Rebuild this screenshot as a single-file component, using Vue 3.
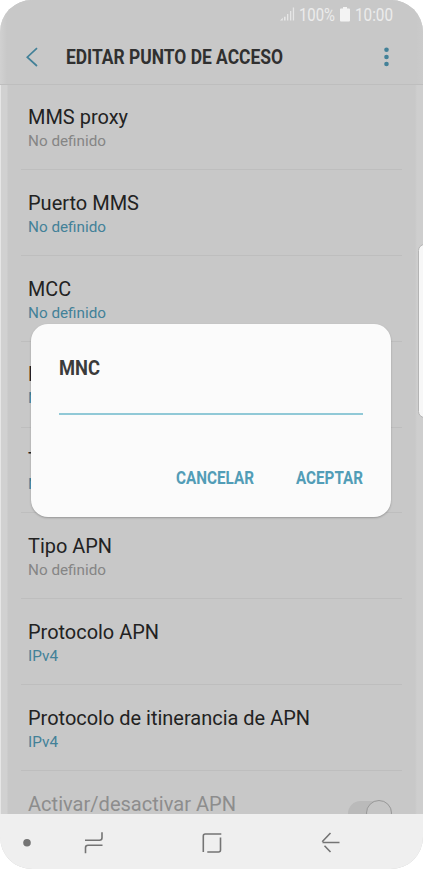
<script setup>
const rows = [
  { title: 'MMS proxy', w: 100, value: 'No definido', vw: 78, muted: true },
  { title: 'Puerto MMS', w: 111, value: 'No definido', vw: 78 },
  { title: 'MCC', w: 43, value: 'No definido', vw: 78 },
  { title: 'MNC', w: 43, value: 'No definido', vw: 78 },
  { title: 'Tipo de autenticación', w: 186, value: 'No definido', vw: 78 },
  { title: 'Tipo APN', w: 84, value: 'No definido', vw: 78, muted: true },
  { title: 'Protocolo APN', w: 131, value: 'IPv4', vw: 30 },
  { title: 'Protocolo de itinerancia de APN', w: 282, value: 'IPv4', vw: 30 },
]
</script>

<template>
  <div class="phone">
    <header class="top">
      <div class="status">
        <svg class="signal" width="15" height="14" viewBox="0 0 15 14">
          <path d="M0 13.5 2.8 10.7V13.5ZM4 9.8H5.6V13.5H4ZM7 7H8.3V13.5H7ZM10 4H11.3V13.5H10ZM12.8 .5H14.1V13.5H12.8Z" fill="#e6e6e6" />
        </svg>
        <svg class="pct" width="37" height="22"><text x="0" y="17" textLength="36" lengthAdjust="spacingAndGlyphs">100%</text></svg>
        <svg class="battery" width="10" height="15" viewBox="0 0 10 15">
          <path d="M3 0H7V1.500H9Q10 1.500 10 2.500V13.500Q10 14.500 9 14.500H1Q0 14.500 0 13.500V2.500Q0 1.500 1 1.500H3Z" fill="#f3f3f3" />
        </svg>
        <svg class="clock" width="40" height="22"><text x="0" y="17" textLength="38" lengthAdjust="spacingAndGlyphs">10:00</text></svg>
      </div>
      <div class="bar">
        <svg class="back" width="14" height="22" viewBox="0 0 14 22"><path d="M12 2.200 2.300 11.200 12 20" fill="none" stroke="#438198" stroke-width="1.700" /></svg>
        <svg class="heading" width="220" height="28"><text x="0" y="21" textLength="217" lengthAdjust="spacingAndGlyphs">EDITAR PUNTO DE ACCESO</text></svg>
        <svg class="more" width="6" height="22" viewBox="0 0 6 22" fill="#438198"><circle cx="3.500" cy="3.700" r="2.300" /><circle cx="3.500" cy="11" r="2.300" /><circle cx="3.500" cy="18" r="2.300" /></svg>
      </div>
    </header>

    <main class="list">
      <div v-for="r in rows" :key="r.title" class="row">
        <svg class="title" height="26" :width="r.w + 4"><text x="0" y="20" :textLength="r.w" lengthAdjust="spacingAndGlyphs">{{ r.title }}</text></svg>
        <svg class="value" :class="{ muted: r.muted }" height="20" :width="r.vw + 4"><text x="0" y="15" :textLength="r.vw" lengthAdjust="spacingAndGlyphs">{{ r.value }}</text></svg>
      </div>
      <div class="row last">
        <svg class="title off" height="26" width="212"><text x="0" y="20.500" textLength="208" lengthAdjust="spacingAndGlyphs">Activar/desactivar APN</text></svg>
        <span class="toggle"><span class="knob"></span></span>
      </div>
    </main>

    <nav class="nav">
      <svg width="423" height="56" viewBox="0 0 423 56" fill="none" stroke="#747474" stroke-width="1.600">
        <circle cx="27" cy="28.700" r="3.800" fill="#747474" stroke="none" />
        <path d="M85 26.300H99.500Q102 26.300 102 23.800V18.300M102.500 31.200H88Q85.500 31.200 85.500 33.700V39.200" />
        <path d="M203.300 38V22Q203.300 20 205.300 20H221.300M220.500 23.500V36Q220.500 38 218.500 38H207.300" />
        <path d="M339.500 28.500H322.500M330.500 19 322.200 27.800M324.500 31.800 330.500 38" />
      </svg>
    </nav>

    <div class="edge"></div>

    <section class="dialog" role="dialog">
      <svg class="name" width="46" height="28"><text x="0" y="21" textLength="41" lengthAdjust="spacingAndGlyphs">MNC</text></svg>
      <div class="field"></div>
      <div class="actions">
        <svg width="78" height="24"><text x="0" y="18" textLength="78" lengthAdjust="spacingAndGlyphs">CANCELAR</text></svg>
        <svg width="67" height="24"><text x="0" y="18" textLength="67" lengthAdjust="spacingAndGlyphs">ACEPTAR</text></svg>
      </div>
    </section>
  </div>
</template>

<style>
body { margin: 0; background: #fff; }
</style>

<style scoped>
.phone {
  position: relative;
  box-sizing: border-box;
  width: 423px;
  height: 869px;
  overflow: hidden;
  display: flex;
  flex-direction: column;
  border-radius: 32px;
  background: linear-gradient(90deg, #e6e6e6 0 1px, #d1d1d1 1px 7px, #c8c8c8 8px 415px, #cecece 417px 423px);
  font-family: Roboto, "Liberation Sans", sans-serif;
}
svg { display: block; flex: none; overflow: visible; }
.top {
  box-sizing: border-box;
  height: 84.500px;
  flex: none;
  border-bottom: 1px solid #bebebe;
  background: linear-gradient(90deg, #d1d1d1 0, #c8c8c8 7px 416px, #cbcbcb 423px);
}
.status {
  height: 29px;
  display: flex;
  align-items: flex-start;
  justify-content: flex-end;
  padding-right: 28px;
  font-size: 18px;
  fill: #ececec;
}
.signal { margin: 7px 4.500px 0 0; }
.pct { margin: 3.500px 4px 0 0; }
.battery { margin: 6.500px 5px 0 0; }
.clock { margin-top: 3.500px; }
.bar {
  height: 55px;
  display: flex;
  align-items: center;
  padding: 0 34px 0 25px;
}
.heading {
  margin: 1px 0 0 27px;
  font-size: 20.500px;
  font-weight: 700;
  fill: #303030;
}
.more { margin-left: auto; }
.list { flex: 1; min-height: 0; overflow: hidden; }
.row {
  box-sizing: border-box;
  height: 85.800px;
  margin: 0 21px;
  padding: 19.500px 0 0 7px;
  border-bottom: 1px solid #bebebe;
}
.title { margin-left: -.500px; font-size: 20px; fill: #222; }
.value { margin-top: 1px; font-size: 15.500px; fill: #438198; }
.muted { fill: #858585; }
.off { fill: #8d8d8d; }
.last { display: flex; justify-content: space-between; border: 0; }
.toggle {
  box-sizing: border-box;
  width: 44px;
  height: 25px;
  margin: 11px 10px 0 0;
  border-radius: 13px;
  background: #bababa;
  display: flex;
  justify-content: flex-end;
}
.knob {
  box-sizing: border-box;
  width: 26px;
  height: 26px;
  margin-top: -1px;
  border: 1px solid #989898;
  border-radius: 50%;
  background: #c5c5c5;
}
.nav { height: 55.500px; flex: none; background: #efefef; }
.edge {
  position: absolute;
  top: 244px;
  right: -8px;
  box-sizing: border-box;
  width: 13.500px;
  height: 174px;
  border: 1px solid #b4b4b4;
  border-radius: 7px;
  background: #f7f7f7;
}
.dialog {
  position: absolute;
  top: 324px;
  left: 31px;
  box-sizing: border-box;
  width: 360px;
  height: 193px;
  padding: 30px 28px 0;
  border-radius: 17px;
  background: #fbfbfb;
  box-shadow: 0 1px 2px rgba(0, 0, 0, .25);
}
.name { font-size: 20.500px; font-weight: 700; fill: #3b3b3b; }
.field { height: 31px; border-bottom: 2px solid #91c9d7; }
.actions {
  display: flex;
  justify-content: flex-end;
  gap: 42px;
  margin-top: 51px;
  font-size: 18px;
  font-weight: 700;
  fill: #529db7;
}
</style>
